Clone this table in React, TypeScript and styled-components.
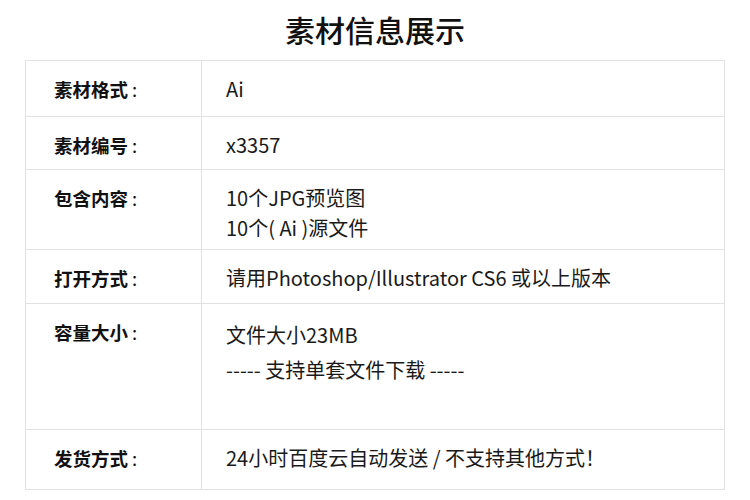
import React from "react";
import styled, { createGlobalStyle } from "styled-components";

const Global = createGlobalStyle`
  html, body { margin: 0; padding: 0; background: #fff; }
  body { font-family: "Noto Sans CJK SC", "Noto Sans", sans-serif; color: #111; }
`;

const Page = styled.div`
  width: 750px;
  height: 500px;
  box-sizing: border-box;
  padding: 0 25px;
  display: flex;
  flex-direction: column;
`;

const Title = styled.h1`
  margin: 0;
  height: 60px;
  line-height: 58px;
  text-align: center;
  font-size: 30px;
  font-weight: 500;
  color: #111;
`;

const Table = styled.div`
  width: 700px;
  box-sizing: border-box;
  border: 1px solid #e2e2e2;
  display: flex;
  flex-direction: column;
`;

const Row = styled.div<{ $h: number; $first?: boolean }>`
  display: grid;
  grid-template-columns: 176px 1fr;
  box-sizing: border-box;
  height: ${(p) => p.$h}px;
  border-top: ${(p) => (p.$first ? "none" : "1px solid #e2e2e2")};
`;

const Label = styled.div`
  border-right: 1px solid #e2e2e2;
  padding: 13px 0 0 28px;
  font-size: 18.5px;
  line-height: 30px;
  font-weight: 700;
  color: #111;
`;

const Colon = styled.span`
  font-weight: 400;
  margin-left: 4px;
`;

const Value = styled.div<{ $lh?: number }>`
  padding: 13px 0 0 24px;
  font-size: 20px;
  line-height: ${(p) => p.$lh ?? 30}px;
  color: #1a1a1a;
`;

const Line = styled.div``;

type RowData = { label: string; lines: string[]; h: number; lh?: number };

const rows: RowData[] = [
  { label: "素材格式", lines: ["Ai"], h: 55 },
  { label: "素材编号", lines: ["x3357"], h: 53 },
  { label: "包含内容", lines: ["10个JPG预览图", "10个( Ai )源文件"], h: 80 },
  { label: "打开方式", lines: ["请用Photoshop/Illustrator CS6 或以上版本"], h: 54 },
  { label: "容量大小", lines: ["文件大小23MB", "----- 支持单套文件下载 -----"], h: 126, lh: 35 },
  { label: "发货方式", lines: ["24小时百度云自动发送 / 不支持其他方式！"], h: 60 },
];

export default function App() {
  return (
    <>
      <Global />
      <Page>
        <Title>素材信息展示</Title>
        <Table>
          {rows.map((r, i) => (
            <Row key={r.label} $h={r.h} $first={i === 0}>
              <Label>
                {r.label}
                <Colon>:</Colon>
              </Label>
              <Value $lh={r.lh}>
                {r.lines.map((l) => (
                  <Line key={l}>{l}</Line>
                ))}
              </Value>
            </Row>
          ))}
        </Table>
      </Page>
    </>
  );
}
